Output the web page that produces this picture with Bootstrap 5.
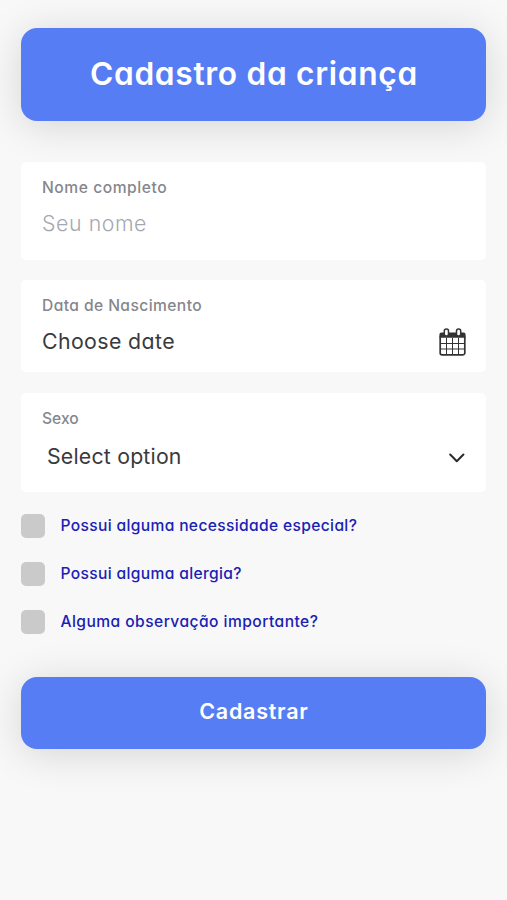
<!DOCTYPE html>
<html lang="pt-BR">
<head>
<meta charset="utf-8">
<meta name="viewport" content="width=device-width, initial-scale=1">
<title>Cadastro da criança</title>
<link href="https://cdn.jsdelivr.net/npm/bootstrap@5.3.0/dist/css/bootstrap.min.css" rel="stylesheet">
<style>
  body {
    background: #f8f8f8;
    font-family: Inter, "Open Sans", sans-serif;
    font-feature-settings: "cv11";
    min-height: 900px;
    overflow: hidden;
  }
  .page { padding: 28px 20.6px 0 21.4px; }
  .banner, .submit {
    background: #567df3;
    color: #fff;
    border: 0;
    border-radius: 16px;
    box-shadow: 0 5px 40px rgba(0, 0, 0, .14);
    font-weight: 600;
  }
  .banner { height: 93px; font-size: 31.7px; letter-spacing: .68px; padding-bottom: 1px; }
  .submit { height: 72px; font-size: 21.5px; letter-spacing: .75px; margin-top: 43px; padding-bottom: 4px; }
  .field { background: #fff; border-radius: 5px; padding: 15.5px 20.6px 0; }
  .field-name { height: 98px; margin-top: 41px; }
  .field-date { height: 92px; margin-top: 20px; }
  .field-sex { height: 98.500px; margin-top: 21px; }
  .field-label { color: #85878d; font-size: 15.6px; font-weight: 500; line-height: 20px; letter-spacing: .42px; display: block; }
  .field-value { color: #3a3a3c; font-size: 21.3px; line-height: 30px; letter-spacing: .4px; margin-top: 10.5px; }
  .field-name .field-label { letter-spacing: .56px; }
  .field-name .field-value { letter-spacing: .58px; }
  .field-name input::placeholder { color: #a6a8b0; opacity: 1; font-weight: 300; }
  .field-name input, .field-name input:focus { outline: 0; box-shadow: none; }
  .field-sex .field-label { letter-spacing: 0; }
  .field-sex .field-value { letter-spacing: .2px; margin-top: 12.5px; padding-left: 5px; }
  .calendar { margin-top: 2px; }
  .checks { margin-top: 22px; gap: 24.2px; }
  .check-row { gap: 15px; color: #1a21b4; font-size: 15.6px; font-weight: 500; line-height: 24px; letter-spacing: .35px; }
  .check-row:last-child { letter-spacing: .45px; }
  .check-row input { appearance: none; width: 24px; height: 24px; background: #cacaca; border-radius: 5px; margin: 0; flex: none; }
  .check-row input:checked { background: #567df3; }
</style>
</head>
<body>
<main class="page d-flex flex-column">
  <h1 class="banner d-flex align-items-center justify-content-center mb-0">Cadastro da criança</h1>
  <form class="d-flex flex-column">
    <div class="field field-name">
      <label class="field-label" for="nome">Nome completo</label>
      <input id="nome" type="text" class="field-value w-100 border-0 bg-transparent p-0 d-block" placeholder="Seu nome">
    </div>
    <div class="field field-date">
      <span class="field-label">Data de Nascimento</span>
      <div class="field-value d-flex justify-content-between">
        <span>Choose date</span>
        <svg class="calendar" width="27" height="28" viewBox="0 0 27 28" fill="none" stroke="#333">
          <path d="M1.200 8.500V25a1.800 1.800 0 0 0 1.800 1.800h21a1.800 1.800 0 0 0 1.800-1.800V8.500" stroke-width="1.700"/>
          <path d="M.4 9.800V6.500A2 2 0 0 1 2.400 4.500H24.600a2 2 0 0 1 2 2V9.800z" fill="#333" stroke="none"/>
          <path d="M7.500 10v16.500M13.500 10v16.500M19.500 10v16.500M1 15.500h25M1 21h25" stroke-width="1"/>
          <rect x="5.300" y="1" width="4.200" height="7" rx="2" fill="#fff" stroke-width="1.500"/>
          <rect x="17.500" y="1" width="4.200" height="7" rx="2" fill="#fff" stroke-width="1.500"/>
        </svg>
      </div>
    </div>
    <div class="field field-sex">
      <span class="field-label">Sexo</span>
      <div class="field-value d-flex justify-content-between align-items-center">
        <span>Select option</span>
        <svg class="mt-1" width="17" height="10" viewBox="0 0 17 10" fill="none" stroke="#2b2b2b" stroke-width="2" stroke-linecap="round" stroke-linejoin="round"><path d="M1.200 1.500 7.800 8.200l6.600-6.700"/></svg>
      </div>
    </div>
    <div class="checks d-flex flex-column">
      <label class="check-row d-flex align-items-center"><input type="checkbox"><span>Possui alguma necessidade especial?</span></label>
      <label class="check-row d-flex align-items-center"><input type="checkbox"><span>Possui alguma alergia?</span></label>
      <label class="check-row d-flex align-items-center"><input type="checkbox"><span>Alguma observação importante?</span></label>
    </div>
    <button type="button" class="submit w-100">Cadastrar</button>
  </form>
</main>
<script src="https://cdn.jsdelivr.net/npm/bootstrap@5.3.0/dist/js/bootstrap.bundle.min.js"></script>
</body>
</html>
